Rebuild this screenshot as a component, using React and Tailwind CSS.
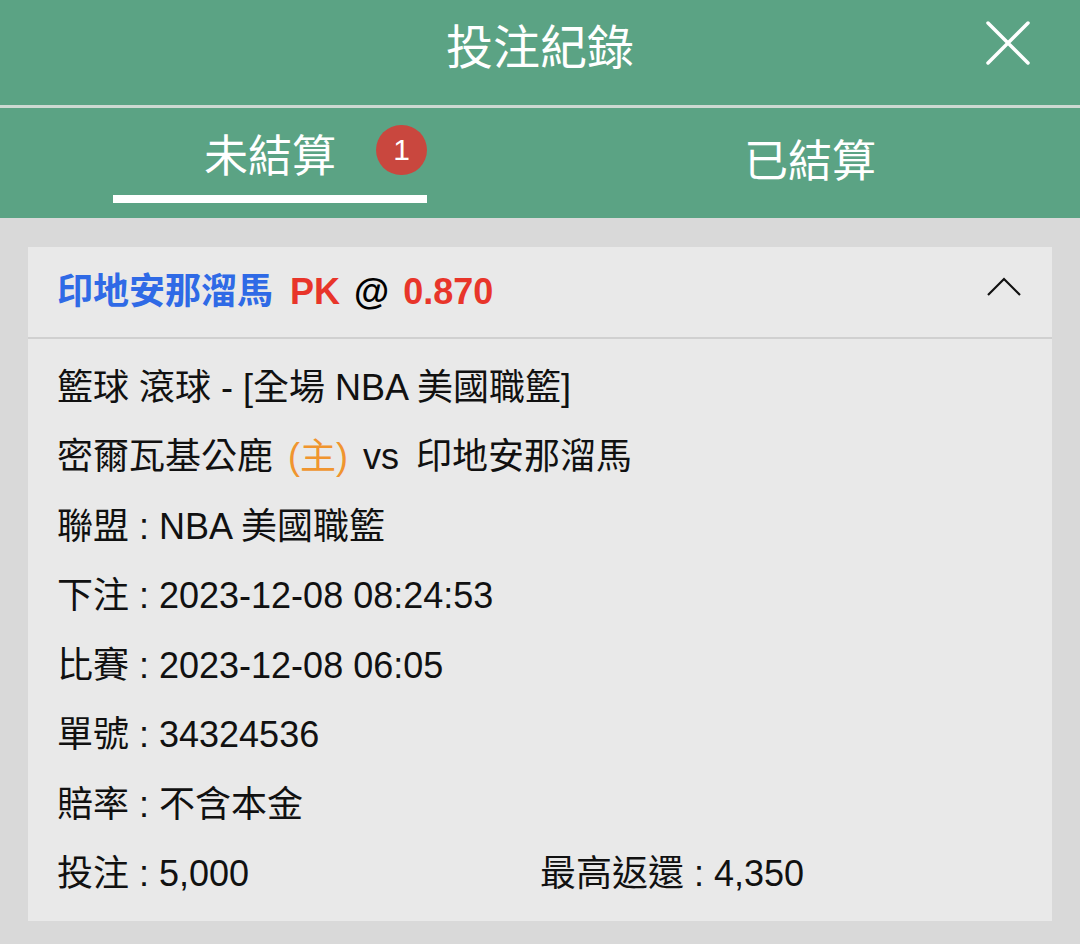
export default function App() {
  const font = { fontFamily: '"Liberation Sans", "Noto Sans CJK TC", sans-serif' };
  const rows = [
    <>籃球 滾球 - [全場 NBA 美國職籃]</>,
    <>
      <span>密爾瓦基公鹿</span>
      <span className="ml-[15px] text-[#f0952f]">(主)</span>
      <span className="ml-[15px]">vs</span>
      <span className="ml-[17px]">印地安那溜馬</span>
    </>,
    <>聯盟 : NBA 美國職籃</>,
    <>下注 : 2023-12-08 08:24:53</>,
    <>比賽 : 2023-12-08 06:05</>,
    <>單號 : 34324536</>,
    <>賠率 : 不含本金</>,
  ];
  return (
    <div className="w-[1080px] h-[944px] bg-[#d9d9d9] flex flex-col" style={font}>
      <div className="h-[105px] bg-[#5ba384] relative flex items-center justify-center">
        <span className="text-white text-[47px] leading-none pb-[10px]">投注紀錄</span>
        <svg className="absolute left-[984px] top-[20px]" width="48" height="46" viewBox="0 0 48 46">
          <path d="M4 3 L44 43 M44 3 L4 43" stroke="white" strokeWidth="3.5" strokeLinecap="round" />
        </svg>
      </div>
      <div className="h-[3px] bg-[#cdd9d2]" />
      <div className="h-[110px] bg-[#5ba384] grid grid-cols-2">
        <div className="relative flex flex-col items-center">
          <span className="text-white text-[44px] leading-none mt-[27px]">未結算</span>
          <span className="absolute left-[376px] top-[17px] w-[51px] h-[50px] rounded-full bg-[#c9473e] text-white text-[30px] leading-none flex items-center justify-center">1</span>
          <div className="w-[314px] h-[8px] bg-white mt-[16px]" />
        </div>
        <div className="flex flex-col items-center">
          <span className="text-white text-[44px] leading-none mt-[32px]">已結算</span>
        </div>
      </div>
      <div className="px-[28px] pt-[29px]">
        <div className="bg-[#e9e9e9]">
          <div className="h-[92px] border-b-[2px] border-[#d0d0d0] flex items-center justify-between pl-[29px] pr-[30px]">
            <div className="text-[36px] font-bold leading-none flex items-baseline whitespace-nowrap">
              <span className="text-[#2f6ae6]">印地安那溜馬</span>
              <span className="ml-[17px] text-[#e8352a]">PK</span>
              <span className="ml-[14px] text-black">@</span>
              <span className="ml-[14px] text-[#e8352a]">0.870</span>
            </div>
            <svg width="36" height="22" viewBox="0 0 36 22" className="mb-[12px]">
              <path d="M2 20 L18 4 L34 20" stroke="#111" strokeWidth="2.2" fill="none" />
            </svg>
          </div>
          <div className="pt-[14px] pb-[12px] px-[29px] text-[36px] text-[#111]">
            {rows.map((r, i) => (
              <div key={i} className="h-[69.5px] flex items-center whitespace-pre">{r}</div>
            ))}
            <div className="h-[69.5px] grid grid-cols-2 items-center whitespace-pre">
              <div>投注 : 5,000</div>
              <div>最高返還 : 4,350</div>
            </div>
          </div>
        </div>
      </div>
    </div>
  );
}
